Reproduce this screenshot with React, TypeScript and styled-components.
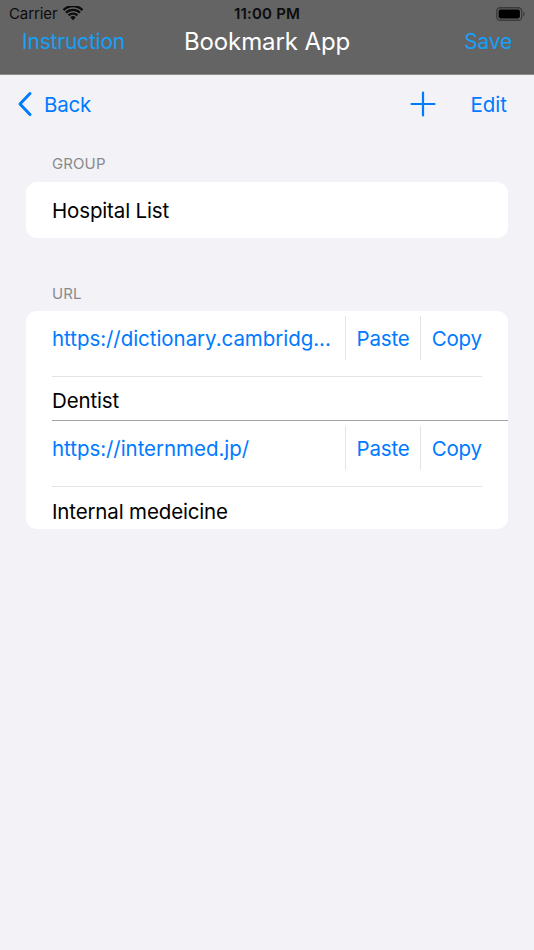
import React from "react";
import styled, { createGlobalStyle } from "styled-components";

const Global = createGlobalStyle`
  html, body { margin: 0; padding: 0; }
  body {
    background: #f2f2f7;
    font-family: Inter, "Noto Sans", "Liberation Sans", sans-serif;
    -webkit-font-smoothing: antialiased;
  }
`;

const Screen = styled.div`
  width: 534px;
  height: 950px;
  background: #f2f2f7;
  display: flex;
  flex-direction: column;
  overflow: hidden;
`;

const Header = styled.header`
  background: #646464;
  height: 74px;
  display: flex;
  flex-direction: column;
  border-bottom: 1px solid #8c8c8c;
`;

const StatusBar = styled.div`
  height: 28px;
  display: grid;
  grid-template-columns: 1fr auto 1fr;
  align-items: center;
  padding: 0 9px 0 9px;
  font-size: 15px;
  color: #0c0c0c;
`;

const StatusLeft = styled.div`
  display: flex;
  align-items: center;
  gap: 6px;
  letter-spacing: -0.1px;
`;

const StatusTime = styled.div`
  font-weight: 600;
  letter-spacing: 0.2px;
`;

const StatusRight = styled.div`
  display: flex;
  justify-content: flex-end;
  align-items: center;
`;

const NavBar = styled.div`
  flex: 1;
  display: grid;
  grid-template-columns: 1fr auto 1fr;
  align-items: center;
  padding: 0 22px 18px 22px;
`;

const HeaderButton = styled.span<{ $align?: "left" | "right" }>`
  color: #16a0f7;
  font-size: 21px;
  justify-self: ${(p) => (p.$align === "right" ? "end" : "start")};
  letter-spacing: -0.2px;
`;

const Title = styled.span`
  color: #ffffff;
  font-size: 24px;
  letter-spacing: -0.1px;
`;

const Toolbar = styled.div`
  height: 58px;
  display: flex;
  align-items: center;
  padding: 0 27px 2px 17px;
  color: #007aff;
  font-size: 20.5px;
`;

const BackButton = styled.div`
  display: flex;
  align-items: center;
  gap: 11px;
  letter-spacing: -0.2px;
`;

const Spacer = styled.div`
  flex: 1;
`;

const ToolbarRight = styled.div`
  display: flex;
  align-items: center;
  gap: 34px;
`;

const Content = styled.div`
  display: flex;
  flex-direction: column;
  padding: 0 26px;
`;

const SectionLabel = styled.div<{ $top: number }>`
  margin-top: ${(p) => p.$top}px;
  padding-left: 26px;
  font-size: 15px;
  color: #8a8a8e;
  height: 28px;
  display: flex;
  align-items: center;
  letter-spacing: 0.1px;
`;

const Card = styled.div<{ $top?: number }>`
  background: #ffffff;
  border-radius: 11px;
  display: flex;
  flex-direction: column;
  overflow: hidden;
  margin-top: ${(p) => p.$top ?? 5}px;
`;

const PlainRow = styled.div<{ $h: number; $shift?: number }>`
  height: ${(p) => p.$h}px;
  display: flex;
  align-items: center;
  padding-left: 26px;
  padding-top: ${(p) => p.$shift ?? 0}px;
  box-sizing: border-box;
  font-size: 20.5px;
  color: #000;
  letter-spacing: -0.15px;
`;

const UrlRow = styled.div`
  display: flex;
  align-items: center;
  padding: 5px 26px 16px 26px;
  font-size: 20.5px;
  letter-spacing: -0.15px;
`;

const UrlText = styled.div`
  flex: 1;
  min-width: 0;
  color: #007aff;
  white-space: nowrap;
  overflow: hidden;
  text-overflow: ellipsis;
  padding-right: 11px;
  letter-spacing: -0.05px;
`;

const ActionButton = styled.div`
  height: 44px;
  display: flex;
  align-items: center;
  color: #007aff;
  border-left: 1px solid #e4e4e6;
  padding-left: 11px;
  padding-right: 10px;
  &:last-child {
    padding-right: 0;
  }
`;

const Separator = styled.div<{ $strong?: boolean }>`
  height: 1px;
  flex-shrink: 0;
  margin-left: 26px;
  margin-right: ${(p) => (p.$strong ? 0 : 26)}px;
  background: ${(p) => (p.$strong ? "#a3a3a3" : "#e4e4e6")};
`;

const Wifi = () => (
  <svg width="20" height="15" viewBox="0 0 20 15">
    <path d="M10 14.2 L7.3 11.3 A3.9 3.9 0 0 1 12.7 11.3 Z" fill="#0c0c0c" />
    <path d="M4.8 8.6 A7.4 7.4 0 0 1 15.2 8.6 L13.6 10.3 A5.2 5.2 0 0 0 6.4 10.3 Z" fill="#0c0c0c" />
    <path d="M2.2 5.9 A11 11 0 0 1 17.8 5.9 L16.2 7.6 A8.7 8.7 0 0 0 3.8 7.6 Z" fill="#0c0c0c" />
    <path d="M-0.3 3.2 A14.6 14.6 0 0 1 20.3 3.2 L18.7 4.9 A12.3 12.3 0 0 0 1.3 4.9 Z" fill="#0c0c0c" />
  </svg>
);

const Battery = () => (
  <svg width="29" height="14" viewBox="0 0 29 14">
    <rect x="0.75" y="0.75" width="25" height="12.5" rx="3.5" fill="none" stroke="#3a3a3a" strokeWidth="1.3" />
    <rect x="2.6" y="2.6" width="21.3" height="8.8" rx="1.8" fill="#000" />
    <path d="M27.2 4.8 Q28.6 5.2 28.6 7 Q28.6 8.8 27.2 9.2 Z" fill="#3a3a3a" />
  </svg>
);

const Chevron = () => (
  <svg width="16" height="26" viewBox="0 0 16 26">
    <path d="M13 2.5 L3 13 L13 23.5" fill="none" stroke="#007aff" strokeWidth="3" strokeLinecap="round" strokeLinejoin="round" />
  </svg>
);

const Plus = () => (
  <svg width="26" height="26" viewBox="0 0 26 26">
    <path d="M13 1.5 V24.5 M1.5 13 H24.5" stroke="#007aff" strokeWidth="2.2" strokeLinecap="round" />
  </svg>
);

const bookmarks = [
  { url: "https://dictionary.cambridg...", name: "Dentist" },
  { url: "https://internmed.jp/", name: "Internal medeicine" },
];

export default function App() {
  return (
    <Screen>
      <Global />
      <Header>
        <StatusBar>
          <StatusLeft>
            <span>Carrier</span>
            <Wifi />
          </StatusLeft>
          <StatusTime>11:00 PM</StatusTime>
          <StatusRight>
            <Battery />
          </StatusRight>
        </StatusBar>
        <NavBar>
          <HeaderButton>Instruction</HeaderButton>
          <Title>Bookmark App</Title>
          <HeaderButton $align="right">Save</HeaderButton>
        </NavBar>
      </Header>
      <Toolbar>
        <BackButton>
          <Chevron />
          <span>Back</span>
        </BackButton>
        <Spacer />
        <ToolbarRight>
          <Plus />
          <span>Edit</span>
        </ToolbarRight>
      </Toolbar>
      <Content>
        <SectionLabel $top={14}>GROUP</SectionLabel>
        <Card>
          <PlainRow $h={56}>Hospital List</PlainRow>
        </Card>
        <SectionLabel $top={41}>URL</SectionLabel>
        <Card $top={4}>
          {bookmarks.map((b, i) => (
            <React.Fragment key={b.url}>
              {i > 0 && <Separator $strong />}
              <UrlRow>
                <UrlText>{b.url}</UrlText>
                <ActionButton>Paste</ActionButton>
                <ActionButton>Copy</ActionButton>
              </UrlRow>
              <Separator />
              <PlainRow $h={i === bookmarks.length - 1 ? 42 : 43} $shift={i === bookmarks.length - 1 ? 6 : 4}>
                {b.name}
              </PlainRow>
            </React.Fragment>
          ))}
        </Card>
      </Content>
    </Screen>
  );
}
